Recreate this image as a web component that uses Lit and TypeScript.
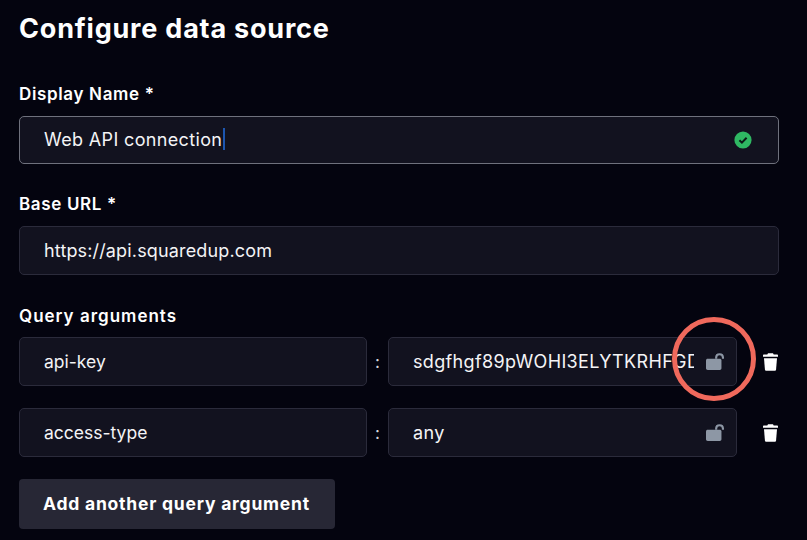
import { LitElement, html, css, svg } from "lit";
import { customElement } from "lit/decorators.js";

const lock = svg`<path d="M0 7C0 6 0.7 5.4 1.6 5.4H13C13.9 5.4 14.6 6 14.6 7V14.4C14.6 15.4 13.9 16 13 16H1.6C0.7 16 0 15.4 0 14.4Z" fill="currentColor"/><path d="M9.6 5.4V4.2C9.6 2.4 11 1.1 12.8 1.1C14.6 1.1 16 2.4 16 4.2V5.4" fill="none" stroke="currentColor" stroke-width="2"/>`;
const trash = svg`<path d="M5 0.2H10L10.7 1.6H14.3C14.7 1.6 15 2 15 2.4V3.8H0V2.4C0 2 0.3 1.6 0.7 1.6H4.3Z" fill="currentColor"/><path d="M1 5.2H14L13.1 16.2C13 17.2 12.5 17.8 11.6 17.8H3.4C2.5 17.8 2 17.2 1.9 16.2Z" fill="currentColor"/>`;

@customElement("app-root")
export class AppRoot extends LitElement {
  static styles = css`
    :host {
      display: block;
      width: 807px;
      height: 540px;
      overflow: hidden;
      background: #04040f;
      color: #fff;
      font-family: Inter, "Noto Sans", sans-serif;
    }
    .page {
      display: flex;
      flex-direction: column;
      padding: 12px 28px 0 19px;
    }
    h1 {
      margin: 0 0 36px;
      height: 34px;
      line-height: 34px;
      font-size: 27px;
      font-weight: 700;
      letter-spacing: 0.8px;
    }
    label {
      display: block;
      height: 22px;
      line-height: 24px;
      font-size: 17px;
      font-weight: 600;
      letter-spacing: 0.65px;
      margin-bottom: 12px;
    }
    label.args { margin-bottom: 11px; letter-spacing: 1px; }
    .field {
      display: flex;
      align-items: center;
      box-sizing: border-box;
      height: 49px;
      padding: 0 24px;
      background: #12121f;
      border: 1px solid #2b2b3b;
      border-radius: 5px;
      font-size: 18px;
      letter-spacing: 0.35px;
      color: #f4f4f6;
      white-space: nowrap;
      overflow: hidden;
    }
    .field.url { letter-spacing: 0.15px; }
    .field.focus {
      height: 48px;
      border-color: #6f717d;
      justify-content: space-between;
      padding: 0 26px 2px 24px;
    }
    .caret {
      display: inline-block;
      width: 2px;
      height: 22px;
      margin-left: 1px;
      background: #1d56b0;
      vertical-align: -4px;
    }
    .group { margin-bottom: 28px; }
    .group.tight { margin-bottom: 29px; }
    .check { width: 18px; height: 18px; flex: none; margin-top: 2px; }
    .row {
      display: flex;
      align-items: center;
      margin-bottom: 22px;
    }
    .row .key { width: 348px; flex: none; font-size: 17.5px; letter-spacing: 0; }
    .colon { width: 21px; flex: none; text-align: center; font-size: 17px; color: #d8d8de; }
    .value {
      position: relative;
      width: 349px;
      flex: none;
      padding-right: 42px;
    }
    .value .text { overflow: hidden; }
    .lock {
      position: absolute;
      right: 12px;
      top: 15px;
      width: 18px;
      height: 17px;
      color: #8d97a5;
    }
    .trash {
      width: 15px;
      height: 18px;
      margin-left: 26px;
      color: #fff;
      flex: none;
    }
    .ring {
      position: absolute;
      left: 672px;
      top: 317px;
      width: 84px;
      height: 84px;
      box-sizing: border-box;
      border: 5px solid #f0695c;
      border-radius: 50%;
    }
    button {
      box-sizing: border-box;
      width: 316px;
      height: 50px;
      border: 0;
      border-radius: 4px;
      background: #272735;
      color: #fff;
      font: 700 17.5px Inter, "Noto Sans", sans-serif;
      letter-spacing: 0.78px;
      text-align: left;
      padding: 0 24px 2px;
    }
  `;

  render() {
    return html`<div class="page">
      <h1>Configure data source</h1>
      <div class="group">
        <label>Display Name *</label>
        <div class="field focus">
          <span>Web API connection<span class="caret"></span></span>
          <svg class="check" viewBox="0 0 18 18">
            <circle cx="9" cy="9" r="8.6" fill="#2fb863" />
            <path d="M5.4 9.3L7.9 11.7L12.6 6.8" fill="none" stroke="#0c1a18" stroke-width="2" />
          </svg>
        </div>
      </div>
      <div class="group tight">
        <label>Base URL *</label>
        <div class="field url">https://api.squaredup.com</div>
      </div>
      <label class="args">Query arguments</label>
      <div class="row">
        <div class="field key">api-key</div>
        <div class="colon">:</div>
        <div class="field value">
          <span class="text">sdgfhgf89pWOHI3ELYTKRHFGD</span>
          <svg class="lock" viewBox="0 0 17 16">${lock}</svg>
        </div>
        <svg class="trash" viewBox="0 0 15 18">${trash}</svg>
      </div>
      <div class="row">
        <div class="field key">access-type</div>
        <div class="colon">:</div>
        <div class="field value">
          <span class="text">any</span>
          <svg class="lock" viewBox="0 0 17 16">${lock}</svg>
        </div>
        <svg class="trash" viewBox="0 0 15 18">${trash}</svg>
      </div>
      <button>Add another query argument</button>
      <div class="ring"></div>
    </div>`;
  }
}
